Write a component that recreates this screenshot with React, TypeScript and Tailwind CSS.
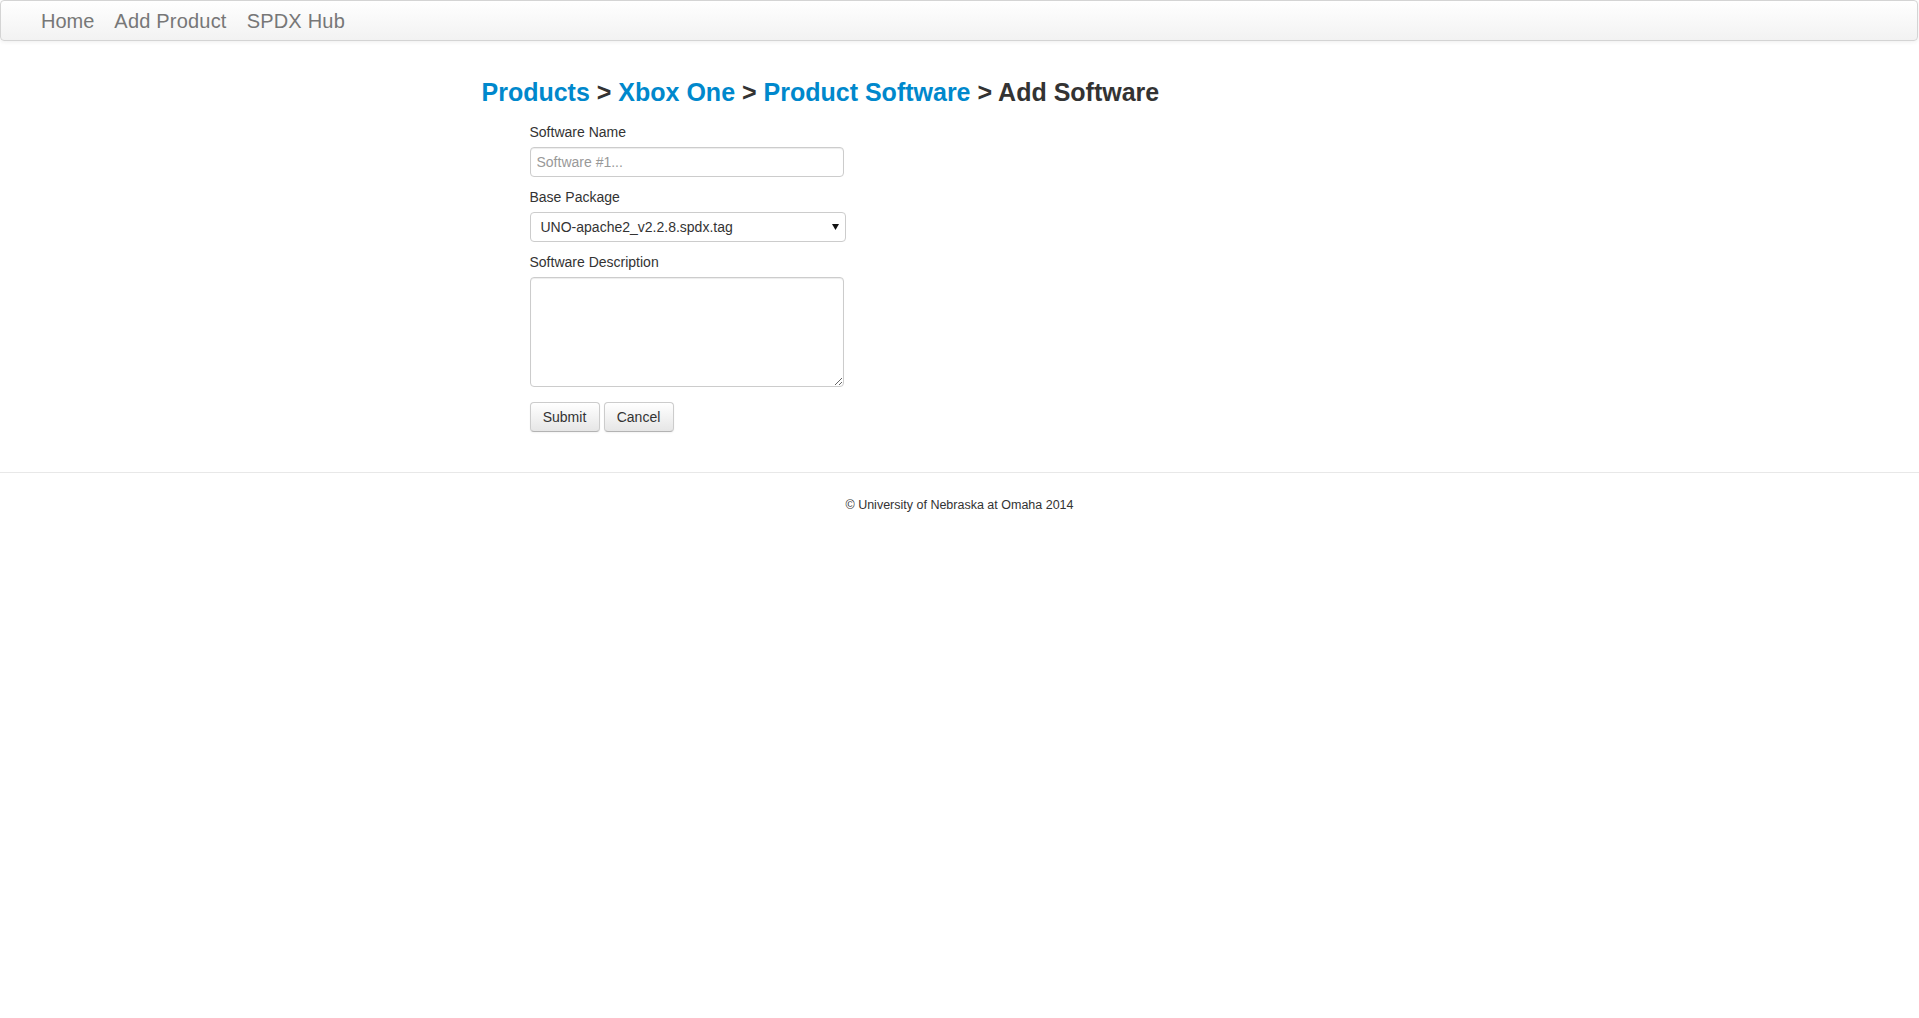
import React from "react";

export default function App() {
  return (
    <div className="min-h-screen bg-white font-['Liberation_Sans',Arial,sans-serif] text-[#333]">
      <nav className="flex h-[41px] w-[1918px] items-center rounded-[4px] border border-[#d4d4d4] bg-gradient-to-b from-white to-[#f2f2f2] pl-[30px] shadow-[0_1px_4px_rgba(0,0,0,0.065)]">
        <a href="#" className="px-[10px] text-[20px] leading-[20px] text-[#777]">Home</a>
        <a href="#" className="px-[10px] text-[20px] leading-[20px] tracking-[0.2px] text-[#777]">Add Product</a>
        <a href="#" className="px-[10px] text-[20px] leading-[20px] tracking-[0.2px] text-[#777]">SPDX Hub</a>
      </nav>

      <div className="mx-auto w-[956px]">
        <h3 className="mt-[31px] text-[25px] font-bold leading-[40px] text-[#333]">
          <a href="#" className="text-[#0088cc]">Products</a> &gt;{" "}
          <a href="#" className="text-[#0088cc]">Xbox One</a> &gt;{" "}
          <a href="#" className="text-[#0088cc]">Product Software</a> &gt; Add Software
        </h3>

        <form className="ml-[48px] mt-[10px]" onSubmit={(e) => e.preventDefault()}>
          <label className="mb-[5px] block text-[14px] leading-[20px]">Software Name</label>
          <input
            type="text"
            placeholder="Software #1..."
            className="mb-[10px] block h-[30px] w-[314px] rounded-[4px] border border-[#ccc] bg-white px-[6px] text-[14px] leading-[20px] text-[#555] shadow-[inset_0_1px_1px_rgba(0,0,0,0.075)] outline-none placeholder:text-[#999]"
          />

          <label className="mb-[5px] block text-[14px] leading-[20px]">Base Package</label>
          <div className="relative mb-[10px] h-[30px] w-[316px]">
            <select className="block h-[30px] w-[316px] appearance-none rounded-[4px] border border-[#ccc] bg-white pl-[10px] text-[14px] leading-[20px] text-[#333] outline-none">
              <option>UNO-apache2_v2.2.8.spdx.tag</option>
            </select>
            <svg
              className="pointer-events-none absolute right-[7px] top-[12px]"
              width="7"
              height="6"
              viewBox="0 0 7 6"
            >
              <path d="M0 0 H7 L3.5 6 Z" fill="#111" />
            </svg>
          </div>

          <label className="mb-[5px] block text-[14px] leading-[20px]">Software Description</label>
          <textarea className="block h-[110px] w-[314px] resize rounded-[4px] border border-[#ccc] bg-white px-[6px] py-[4px] text-[14px] text-[#555] shadow-[inset_0_1px_1px_rgba(0,0,0,0.075)] outline-none" />

          <div className="mt-[15px] flex gap-[4px]">
            <button
              type="submit"
              className="h-[30px] w-[70px] rounded-[4px] border border-[#ccc] border-b-[#b3b3b3] bg-gradient-to-b from-white to-[#e6e6e6] text-[14px] leading-[20px] text-[#333] shadow-[inset_0_1px_0_rgba(255,255,255,0.2),0_1px_2px_rgba(0,0,0,0.05)]"
            >
              Submit
            </button>
            <button
              type="button"
              className="h-[30px] w-[70px] rounded-[4px] border border-[#ccc] border-b-[#b3b3b3] bg-gradient-to-b from-white to-[#e6e6e6] text-[14px] leading-[20px] text-[#333] shadow-[inset_0_1px_0_rgba(255,255,255,0.2),0_1px_2px_rgba(0,0,0,0.05)]"
            >
              Cancel
            </button>
          </div>
        </form>
      </div>

      <footer className="mt-[40px] border-t border-[#e8e8e8] pt-[23px] text-center text-[12.5px] leading-[18px] text-[#333]">
        © University of Nebraska at Omaha 2014
      </footer>
    </div>
  );
}
